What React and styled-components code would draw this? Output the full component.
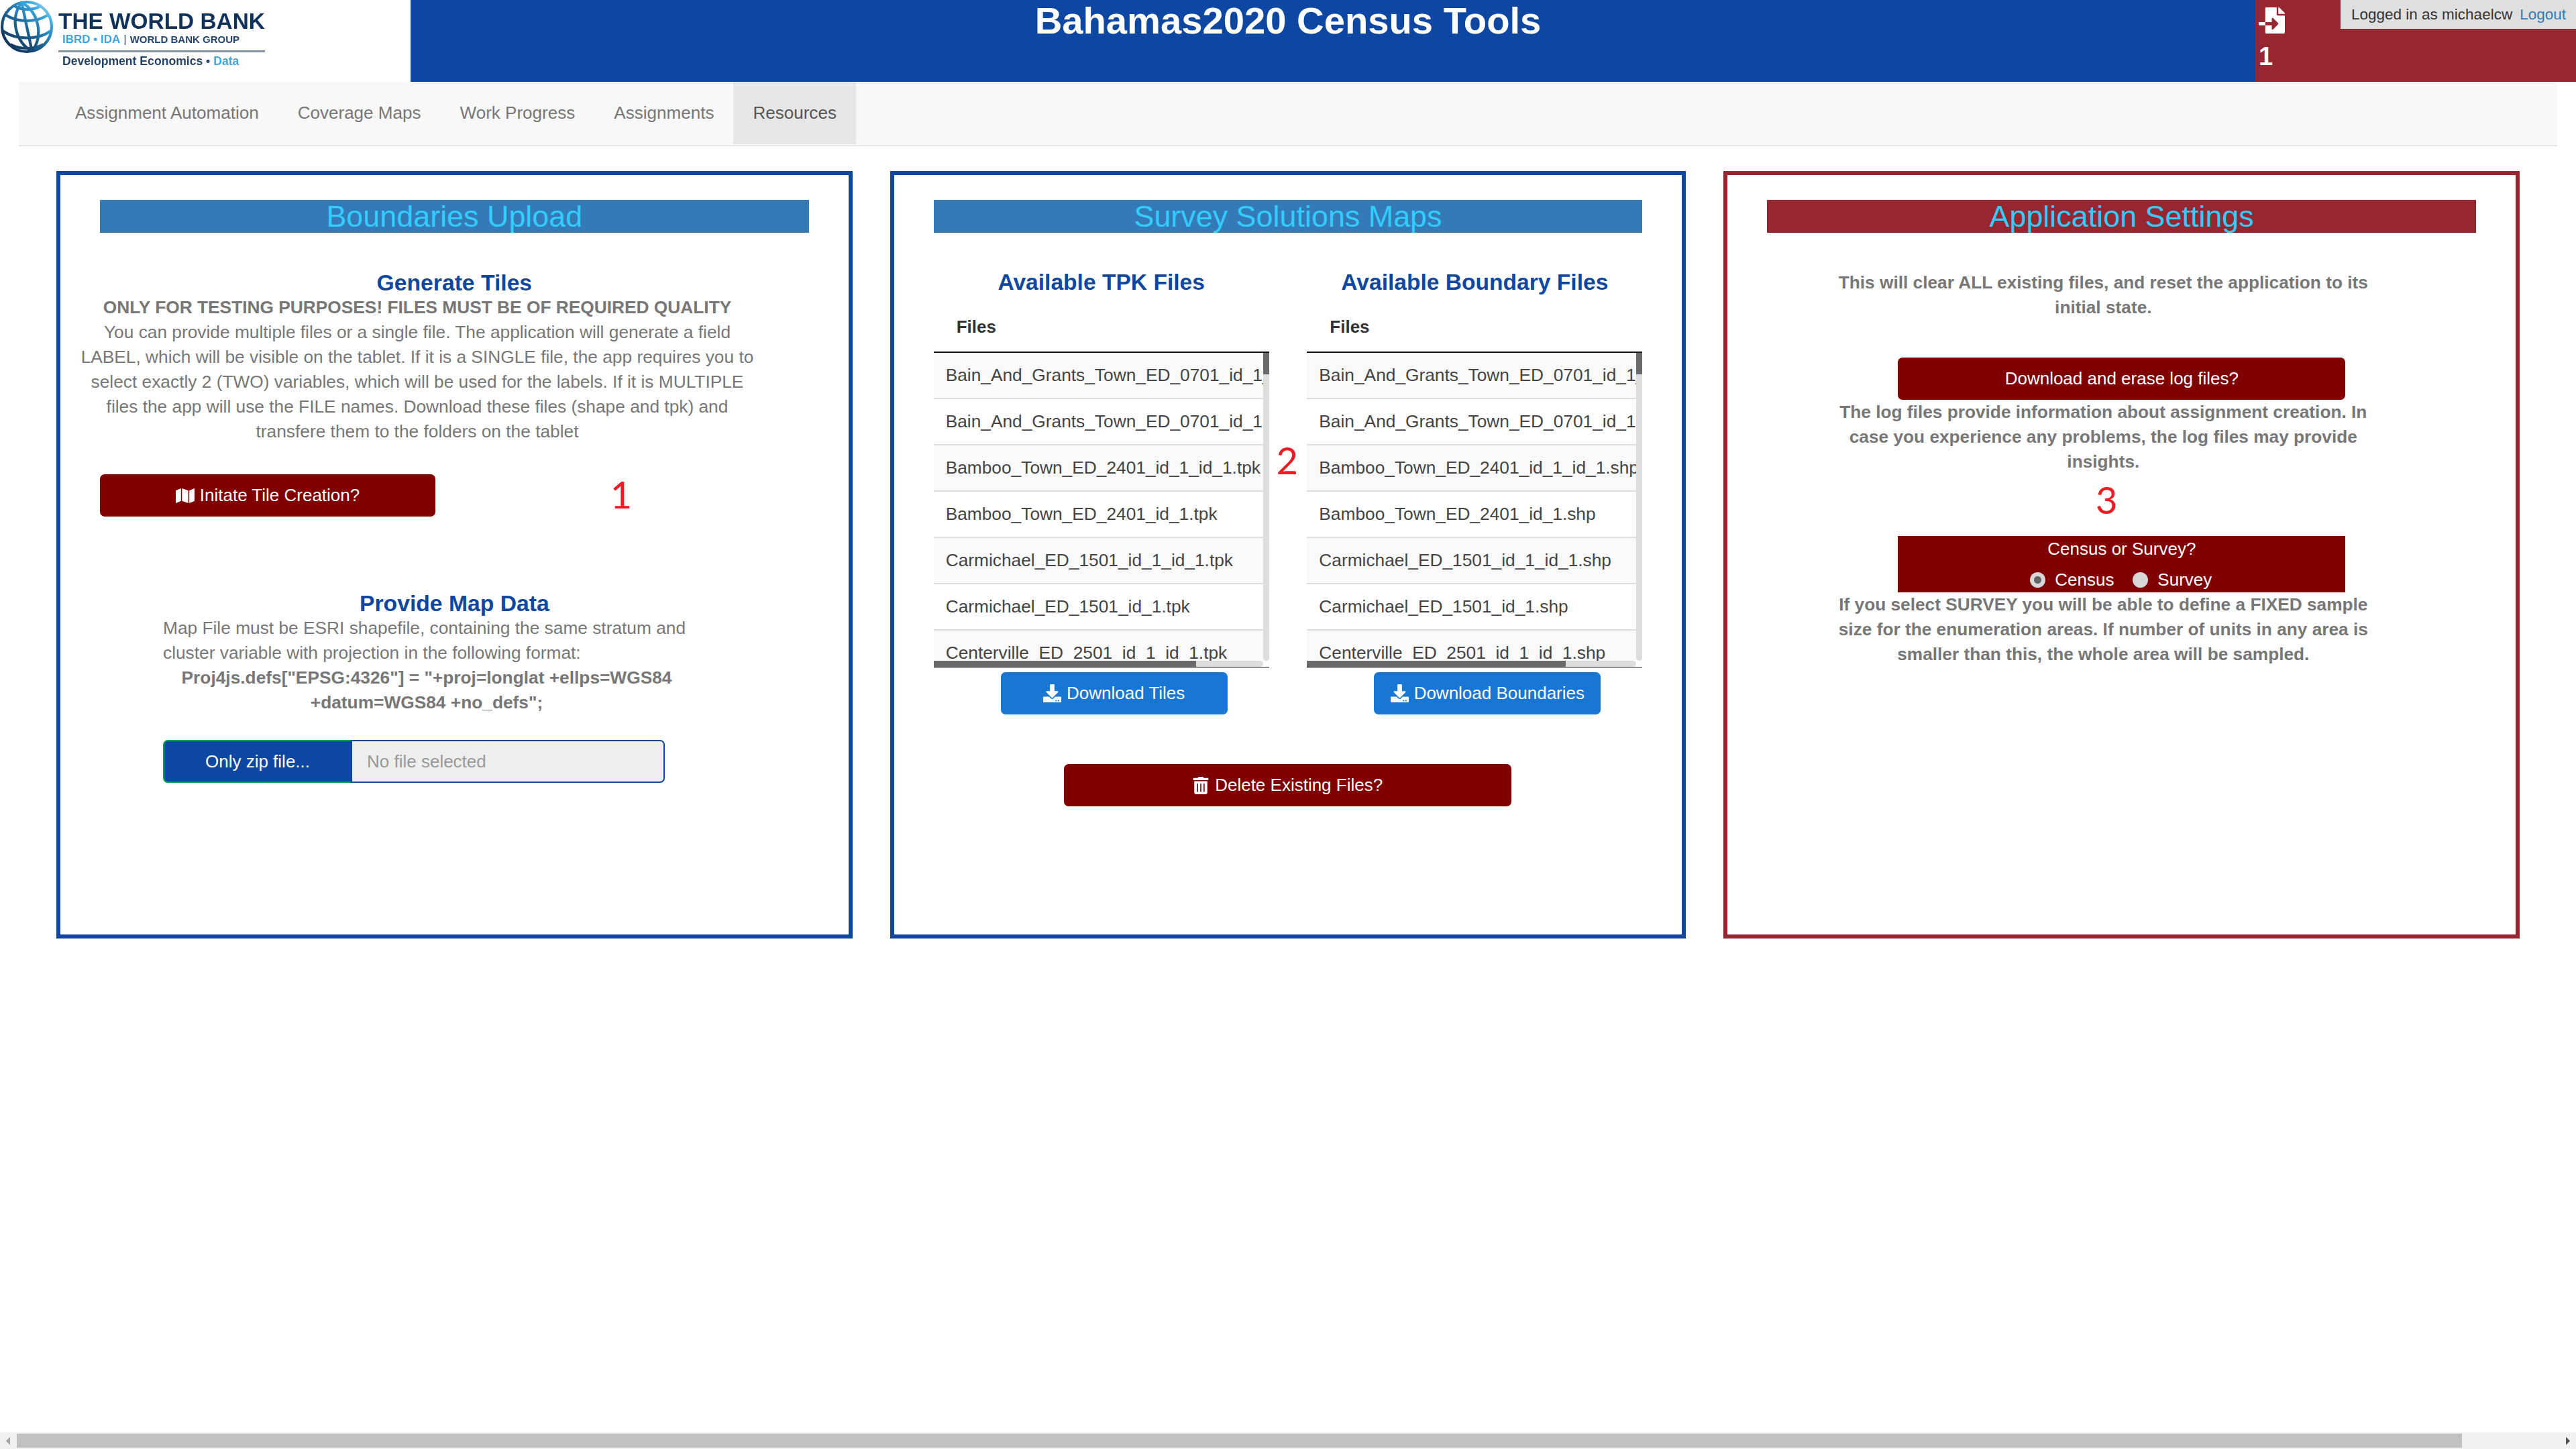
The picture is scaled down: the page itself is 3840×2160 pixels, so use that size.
import React from "react";
import styled, { createGlobalStyle } from "styled-components";
import { FaFileImport, FaMap, FaDownload, FaTrashAlt } from "react-icons/fa";

const BLUE = "#0d47a1";
const RED = "#962630";
const MAROON = "#800000";
const GREY = "#777777";

const Global = createGlobalStyle`
  * { box-sizing: border-box; }
  html, body { margin: 0; padding: 0; background: #fff; }
  body { font-family: "Liberation Sans", Arial, sans-serif; font-size: 26px; line-height: 37px; color: #333; }
`;

const Page = styled.div`
  min-height: 100vh;
  display: flex;
  flex-direction: column;
`;

const Header = styled.header`
  display: grid;
  grid-template-columns: 612px 1fr 478px;
  height: 122px;
`;
const LogoBox = styled.div`
  display: flex;
  align-items: flex-start;
  background: #fff;
  filter: blur(0.5px);
`;
const LogoText = styled.div`
  display: flex;
  flex-direction: column;
  margin-left: 3px;
  width: 308px;
  padding-top: 17px;
`;
const LogoTitle = styled.div`
  font-size: 33.4px;
  line-height: 30px;
  font-weight: 700;
  color: #10315c;
  white-space: nowrap;
  margin-bottom: 3px;
`;
const LogoSub = styled.div`
  padding-left: 6px;
  font-size: 15px;
  line-height: 18px;
  font-weight: 700;
  white-space: nowrap;
  color: #24436b;
  border-bottom: 3px solid #8492a6;
  padding-bottom: 7px;
  span { color: #41a5df; font-size: 17px; }
  em { font-style: normal; font-weight: 400; margin: 0 5px; font-size: 17px; }
`;
const LogoLine = styled.div`
  padding-left: 6px;
  margin-top: 2px;
  font-size: 17.6px;
  line-height: 22px;
  font-weight: 700;
  white-space: nowrap;
  color: #24436b;
  span { color: #41a5df; }
`;
const TitleBar = styled.div`
  background: ${BLUE};
  color: #fff;
  display: flex;
  justify-content: center;
  align-items: flex-start;
  padding-right: 134px;
`;
const Title = styled.h1`
  margin: 0;
  font-size: 56.2px;
  line-height: 62px;
  font-weight: 700;
  white-space: nowrap;
`;
const UserArea = styled.div`
  background: ${RED};
  display: grid;
  grid-template-columns: 127px 1fr;
  align-items: start;
`;
const Notify = styled.div`
  color: #fff;
  padding: 11px 0 0 5px;
  display: flex;
  flex-direction: column;
  font-weight: 700;
  font-size: 38px;
  line-height: 44px;
  svg { display: block; margin-bottom: 12px; }
`;
const UserBox = styled.div`
  background: #dfdfdf;
  height: 43px;
  font-size: 22.5px;
  line-height: 43px;
  padding-left: 16px;
  white-space: nowrap;
  color: #333;
  a { color: #337ab7; margin-left: 11px; text-decoration: none; }
`;

const Nav = styled.nav`
  margin: 0 28px;
  height: 96px;
  background: #f8f8f8;
  border-bottom: 2px solid #e7e7e7;
  padding-left: 55px;
  display: flex;
  align-items: flex-start;
`;
const Tab = styled.a`
  height: 93px;
  padding: 0 29px;
  line-height: 92px;
  font-size: 26.05px;
  white-space: nowrap;
  color: ${(p) => (p.$active ? "#555" : GREY)};
  background: ${(p) => (p.$active ? "#e7e7e7" : "transparent")};
`;

const Panels = styled.main`
  display: grid;
  grid-template-columns: repeat(3, 1fr);
  gap: 56px;
  padding: 37px 84px 0;
`;
const Panel = styled.section`
  position: relative;
  height: 1144px;
  border: 6px solid ${(p) => p.$color};
  padding: 37px 59px 0;
`;
const PanelTitle = styled.h2`
  margin: 0;
  height: 49px;
  font-size: 44.9px;
  line-height: 49px;
  font-weight: 400;
  text-align: center;
  white-space: nowrap;
  color: #33ccff;
  background: ${(p) => p.$color};
`;
const Heading = styled.h4`
  margin: ${(p) => p.$top}px 0 0;
  font-size: 33.7px;
  line-height: 38px;
  font-weight: 700;
  text-align: center;
  color: ${BLUE};
`;
const Copy = styled.div`
  color: ${GREY};
  font-size: 26.3px;
  text-align: ${(p) => p.$align || "center"};
  width: ${(p) => p.$width}px;
  margin-left: ${(p) => p.$left}px;
  margin-top: ${(p) => p.$top || 0}px;
  b, strong { font-weight: 700; }
`;
const Center = styled.div`
  text-align: center;
  font-weight: 700;
`;
const SoftBold = styled.div`
  color: ${GREY};
  font-size: 26.25px;
  text-align: center;
  font-weight: 700;
  width: ${(p) => p.$width}px;
  margin-left: ${(p) => p.$left}px;
  margin-top: ${(p) => p.$top || 0}px;
`;
const Mark = styled.span`
  position: absolute;
  left: ${(p) => p.$x}px;
  top: ${(p) => p.$y}px;
  transform: translate(-50%, -50%);
  font-family: Lato, "Open Sans", sans-serif;
  font-size: 56px;
  line-height: 1;
  color: #ed1c24;
`;
const Button = styled.button`
  display: flex;
  align-items: center;
  justify-content: center;
  gap: 8px;
  border: 0;
  height: 63px;
  border-radius: 7px;
  font: inherit;
  color: #fff;
  background: ${(p) => p.$bg || MAROON};
  width: ${(p) => p.$width}px;
  margin: ${(p) => p.$top || 0}px 0 0 ${(p) => p.$left || 0}px;
  padding: 0;
  white-space: nowrap;
`;

const FilePicker = styled.div`
  display: flex;
  width: 748px;
  height: 64px;
  margin: 37px 0 0 94px;
`;
const FileButton = styled.label`
  width: 280px;
  background: ${BLUE};
  color: #fff;
  text-align: center;
  line-height: 60px;
  border: solid #00a651;
  border-width: 2px 0 2px 2px;
  border-radius: 7px 0 0 7px;
`;
const FileName = styled.div`
  flex: 1;
  background: #eee;
  color: #999;
  border: 2px solid ${BLUE};
  border-radius: 0 7px 7px 0;
  padding-left: 22px;
  line-height: 60px;
`;

const Columns = styled.div`
  display: grid;
  grid-template-columns: 500px 500px;
  justify-content: space-between;
  margin-top: 54px;
`;
const Column = styled.div`
  min-width: 0;
`;
const ColumnTitle = styled.h4`
  margin: 0;
  font-size: 33.6px;
  line-height: 40px;
  font-weight: 700;
  text-align: center;
  color: ${BLUE};
`;
const FilesHead = styled.div`
  padding-left: 34px;
  margin-top: 8px;
  height: 75px;
  font-weight: 700;
  line-height: 76px;
  color: #333;
`;
const Frame = styled.div`
  display: grid;
  grid-template-columns: 491px 9px;
  grid-template-rows: 459px 9px;
  border-top: 2px solid #111;
  border-bottom: 1px solid #111;
`;
const Viewport = styled.div`
  overflow: hidden;
`;
const FileRow = styled.div`
  height: 69px;
  padding: 0 0 2px 18px;
  font-size: 26.3px;
  line-height: 67px;
  white-space: nowrap;
  overflow: hidden;
  color: #444;
  background: ${(p) => (p.$odd ? "#f9f9f9" : "#fff")};
  border-bottom: 2px solid #ddd;
`;
const VTrack = styled.div`
  background: #ddd;
  border-radius: 0 0 5px 5px;
`;
const VThumb = styled.div`
  height: 32px;
  background: #696969;
`;
const HTrack = styled.div`
  background: #ddd;
  border-radius: 0 5px 5px 0;
`;
const HThumb = styled.div`
  height: 9px;
  width: ${(p) => p.$w}px;
  background: #696969;
`;

const CensusBox = styled.div`
  width: 667px;
  height: 84px;
  margin: 92px 0 0 195px;
  background: ${MAROON};
  color: #fff;
  text-align: center;
`;
const CensusTitle = styled.div`
  line-height: 38px;
`;
const RadioRow = styled.div`
  display: flex;
  justify-content: flex-start;
  align-items: center;
  height: 38px;
  margin-top: 8px;
  padding-left: 197px;
`;
const RadioLabel = styled.label`
  display: flex;
  align-items: center;
  gap: 14px;
  width: 153px;
`;
const Radio = styled.input`
  appearance: none;
  margin: 0;
  width: 23px;
  height: 23px;
  border-radius: 50%;
  background: ${(p) => (p.defaultChecked ? "radial-gradient(circle, #666 0 5px, #d8d8d8 6px)" : "#d8d8d8")};
`;

const HBar = styled.div`
  margin-top: auto;
  height: 25px;
  background: #f1f1f1;
  display: flex;
  align-items: center;
  padding: 0 9px;
`;
const HBarThumb = styled.div`
  width: 3645px;
  height: 21px;
  background: #c1c1c1;
  margin-left: 10px;
  margin-right: auto;
`;

const Globe = () => (
  <svg width="84" height="84" viewBox="0 0 84 84" fill="none" style={{ flex: "none" }}>
    <defs>
      <linearGradient id="wbg" x1="10" y1="70" x2="72" y2="6" gradientUnits="userSpaceOnUse">
        <stop offset="0" stopColor="#0f2f55" />
        <stop offset="0.45" stopColor="#1c6595" />
        <stop offset="0.8" stopColor="#39a7df" />
        <stop offset="1" stopColor="#a6dcf5" />
      </linearGradient>
    </defs>
    <g stroke="url(#wbg)" strokeWidth="4.2">
      <circle cx="40" cy="40" r="37" />
      <path d="M40 3C18 20 18 60 40 77M40 3C62 20 62 60 40 77" transform="rotate(-12 40 40)" />
      <path d="M40 3V77" transform="rotate(-12 40 40)" />
      <path d="M8 22C26 34 54 34 72 22M4 46C24 60 56 60 76 46" />
      <path d="M20 8C32 16 50 16 62 8M15 66C30 74 50 74 65 66" />
    </g>
  </svg>
);

const tpk = [
  "Bain_And_Grants_Town_ED_0701_id_1_id_1.tpk",
  "Bain_And_Grants_Town_ED_0701_id_1.tpk",
  "Bamboo_Town_ED_2401_id_1_id_1.tpk",
  "Bamboo_Town_ED_2401_id_1.tpk",
  "Carmichael_ED_1501_id_1_id_1.tpk",
  "Carmichael_ED_1501_id_1.tpk",
  "Centerville_ED_2501_id_1_id_1.tpk",
];
const shp = tpk.map((n) => n.replace(".tpk", ".shp"));

const FileTable = ({ files, thumb }) => (
  <Frame>
    <Viewport>
      {files.map((f, i) => (
        <FileRow key={f} $odd={i % 2 === 0}>{f}</FileRow>
      ))}
    </Viewport>
    <VTrack><VThumb /></VTrack>
    <HTrack><HThumb $w={thumb} /></HTrack>
  </Frame>
);

export default function App() {
  return (
    <Page>
      <Global />
      <Header>
        <LogoBox>
          <Globe />
          <LogoText>
            <LogoTitle>THE WORLD BANK</LogoTitle>
            <LogoSub><span>IBRD • IDA</span><em>|</em>WORLD BANK GROUP</LogoSub>
            <LogoLine>Development Economics • <span>Data</span></LogoLine>
          </LogoText>
        </LogoBox>
        <TitleBar><Title>Bahamas2020 Census Tools</Title></TitleBar>
        <UserArea>
          <Notify>
            <FaFileImport size={39} />
            <span>1</span>
          </Notify>
          <UserBox>Logged in as michaelcw<a>Logout</a></UserBox>
        </UserArea>
      </Header>
      <Nav>
        <Tab>Assignment Automation</Tab>
        <Tab>Coverage Maps</Tab>
        <Tab>Work Progress</Tab>
        <Tab>Assignments</Tab>
        <Tab $active>Resources</Tab>
      </Nav>
      <Panels>
        <Panel $color={BLUE}>
          <PanelTitle $color="#337ab7">Boundaries Upload</PanelTitle>
          <Heading $top={55}>Generate Tiles</Heading>
          <Copy $width={1020} $left={-37}>
            <b>ONLY FOR TESTING PURPOSES! FILES MUST BE OF REQUIRED QUALITY</b>
            <br />
            You can provide multiple files or a single file. The application will generate a field LABEL, which will be visible on the tablet. If it is a SINGLE file, the app requires you to select exactly 2 (TWO) variables, which will be used for the labels. If it is MULTIPLE files the app will use the FILE names. Download these files (shape and tpk) and transfere them to the folders on the tablet
          </Copy>
          <Button $width={500} $top={45}><FaMap size={28} />Initate Tile Creation?</Button>
          <Mark $x={836} $y={476}>1</Mark>
          <Heading $top={110}>Provide Map Data</Heading>
          <Copy $width={786} $left={94} $align="left">
            Map File must be ESRI shapefile, containing the same stratum and cluster variable with projection in the following format:
            <Center>Proj4js.defs["EPSG:4326"] = "+proj=longlat +ellps=WGS84 +datum=WGS84 +no_defs";</Center>
          </Copy>
          <FilePicker>
            <FileButton>Only zip file...</FileButton>
            <FileName>No file selected</FileName>
          </FilePicker>
        </Panel>

        <Panel $color={BLUE}>
          <PanelTitle $color="#337ab7">Survey Solutions Maps</PanelTitle>
          <Columns>
            <Column>
              <ColumnTitle>Available TPK Files</ColumnTitle>
              <FilesHead>Files</FilesHead>
              <FileTable files={tpk} thumb={391} />
              <Button $bg="#1976d2" $width={338} $left={100} $top={7}><FaDownload size={27} />Download Tiles</Button>
            </Column>
            <Column>
              <ColumnTitle>Available Boundary Files</ColumnTitle>
              <FilesHead>Files</FilesHead>
              <FileTable files={shp} thumb={386} />
              <Button $bg="#1976d2" $width={338} $left={100} $top={7}><FaDownload size={27} />Download Boundaries</Button>
            </Column>
          </Columns>
          <Button $width={667} $left={194} $top={74}><FaTrashAlt size={26} />Delete Existing Files?</Button>
          <Mark $x={586} $y={425}>2</Mark>
        </Panel>

        <Panel $color={RED}>
          <PanelTitle $color={RED}>Application Settings</PanelTitle>
          <SoftBold $width={830} $left={86} $top={56}>
            This will clear ALL existing files, and reset the application to its initial state.
          </SoftBold>
          <Button $width={667} $left={195} $top={56}>Download and erase log files?</Button>
          <SoftBold $width={830} $left={86}>
            The log files provide information about assignment creation. In case you experience any problems, the log files may provide insights.
          </SoftBold>
          <Mark $x={565} $y={484}>3</Mark>
          <CensusBox>
            <CensusTitle>Census or Survey?</CensusTitle>
            <RadioRow>
              <RadioLabel><Radio type="radio" name="mode" defaultChecked />Census</RadioLabel>
              <RadioLabel><Radio type="radio" name="mode" />Survey</RadioLabel>
            </RadioRow>
          </CensusBox>
          <SoftBold $width={830} $left={86}>
            If you select SURVEY you will be able to define a FIXED sample size for the enumeration areas. If number of units in any area is smaller than this, the whole area will be sampled.
          </SoftBold>
        </Panel>
      </Panels>
      <HBar>
        <svg width="6" height="12" viewBox="0 0 6 12"><path d="M6 0 0 6l6 6z" fill="#a3a3a3" /></svg>
        <HBarThumb />
        <svg width="6" height="12" viewBox="0 0 6 12"><path d="M0 0l6 6-6 6z" fill="#505050" /></svg>
      </HBar>
    </Page>
  );
}
